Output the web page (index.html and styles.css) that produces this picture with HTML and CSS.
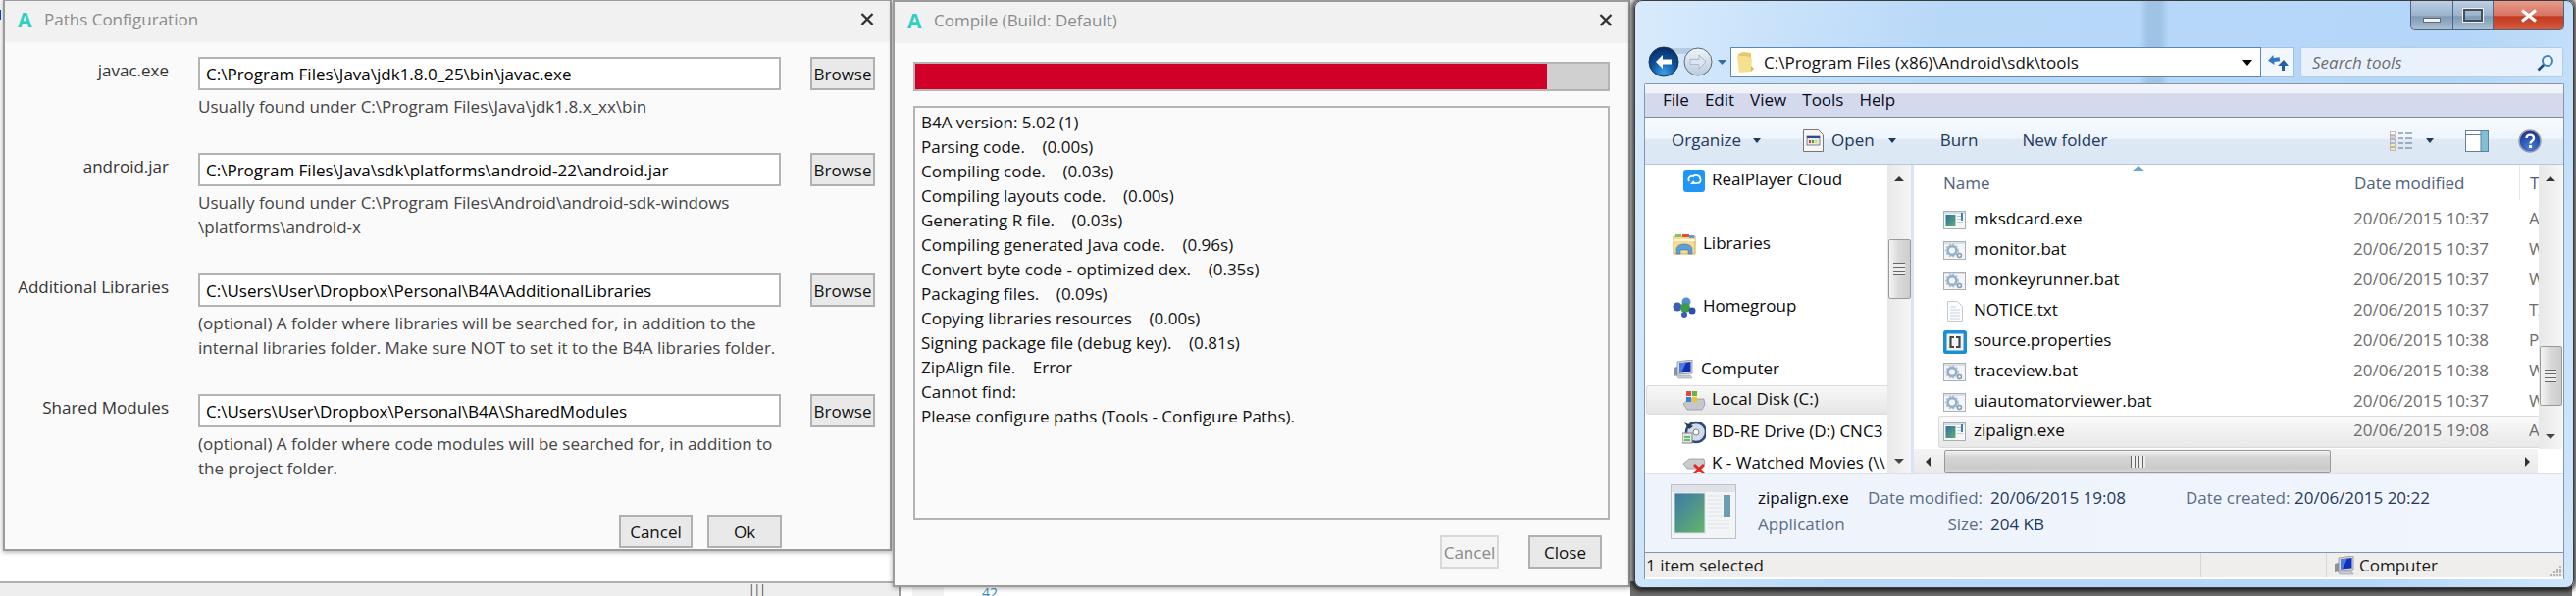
FILE: index.html
```html
<!DOCTYPE html>
<html lang="en">
<head>
<meta charset="utf-8">
<title>Paths Configuration</title>
<link rel="stylesheet" href="styles.css">
</head>
<body>
<svg class="defs" width="0" height="0" aria-hidden="true">
  <defs>
    <linearGradient id="exeG" x1="0" y1="0" x2="1" y2="1"><stop offset="0" stop-color="#2f6da6"/><stop offset="1" stop-color="#62b06e"/></linearGradient>
    <symbol id="i-exe" viewBox="0 0 23 20">
      <rect x=".5" y=".5" width="22" height="18" fill="#f4f6f8" stroke="#a9aeb3"/>
      <rect x="1" y="1" width="21" height="2" fill="#d7dde3"/>
      <rect x="2.5" y="4" width="10" height="12" fill="url(#exeG)"/>
      <rect x="14" y="5" width="6" height="1" fill="#bbb"/><rect x="14" y="8" width="6" height="1" fill="#ccc"/><rect x="14" y="11" width="6" height="1" fill="#ccc"/>
      <rect x="18" y="2" width="2" height="8" fill="#3e7fae"/>
    </symbol>
    <symbol id="i-bat" viewBox="0 0 23 20">
      <rect x=".5" y=".5" width="22" height="18" fill="#f3f5f7" stroke="#aab0b5"/>
      <rect x="1" y="1" width="21" height="2" fill="#d9dfe4"/>
      <circle cx="9" cy="9.5" r="4.4" fill="none" stroke="#93b0cb" stroke-width="2.6"/>
      <circle cx="9" cy="9.5" r="6.2" fill="none" stroke="#a9bed2" stroke-width="1.4" stroke-dasharray="2 1.6"/>
      <circle cx="16.5" cy="14.5" r="2" fill="none" stroke="#7f98b0" stroke-width="1.4"/>
    </symbol>
    <symbol id="i-pc" viewBox="0 0 22 20">
      <path d="M5 2 20 0v14L5 15z" fill="#d5d8dc" stroke="#8a8f95" stroke-width=".8"/>
      <path d="M7 3.500 18.500 2v10.500L7 13.500z" fill="#1030b8"/>
      <path d="M7 3.500 14 2.600 9 13.300 7 13.500z" fill="#4f78e0"/>
      <path d="M1 8l4-1v9l-4 1z" fill="#8d9298"/>
      <path d="M4 16h14l2 3H6z" fill="#c9ccd0" stroke="#8a8f95" stroke-width=".5"/>
    </symbol>
  </defs>
</svg>

<div class="backdrop">
  <div class="backdrop-left"><span class="grip-marks">|||</span></div>
  <div class="backdrop-code"><span class="gutter"></span><span class="line-no">42</span></div>
  <div class="backdrop-desk"></div>
</div>
<span class="blue-tick"></span>

<section class="dialog dialog-paths">
  <header class="titlebar">
    <span class="logo">A</span><span class="title">Paths Configuration</span>
    <svg class="x" width="14" height="13" viewBox="0 0 14 13"><path d="M1.500 1 12.500 12M12.500 1 1.500 12" stroke="#333" stroke-width="2.4" fill="none"/></svg>
  </header>
  <div class="paths-body">
    <div class="path-row">
      <div class="path-label">javac.exe</div>
      <div class="path-field">
        <div class="input">C:\Program Files\Java\jdk1.8.0_25\bin\javac.exe</div>
        <p class="hint">Usually found under C:\Program Files\Java\jdk1.8.x_xx\bin</p>
      </div>
      <div class="btn btn-browse">Browse</div>
    </div>
    <div class="path-row">
      <div class="path-label">android.jar</div>
      <div class="path-field">
        <div class="input">C:\Program Files\Java\sdk\platforms\android-22\android.jar</div>
        <p class="hint">Usually found under C:\Program Files\Android\android-sdk-windows<br>\platforms\android-x</p>
      </div>
      <div class="btn btn-browse">Browse</div>
    </div>
    <div class="path-row">
      <div class="path-label">Additional Libraries</div>
      <div class="path-field">
        <div class="input">C:\Users\User\Dropbox\Personal\B4A\AdditionalLibraries</div>
        <p class="hint">(optional) A folder where libraries will be searched for, in addition to the<br>internal libraries folder. Make sure NOT to set it to the B4A libraries folder.</p>
      </div>
      <div class="btn btn-browse">Browse</div>
    </div>
    <div class="path-row">
      <div class="path-label">Shared Modules</div>
      <div class="path-field">
        <div class="input">C:\Users\User\Dropbox\Personal\B4A\SharedModules</div>
        <p class="hint">(optional) A folder where code modules will be searched for, in addition to<br>the project folder.</p>
      </div>
      <div class="btn btn-browse">Browse</div>
    </div>
    <div class="paths-footer">
      <div class="btn btn-cancel">Cancel</div>
      <div class="btn btn-ok">Ok</div>
    </div>
  </div>
</section>

<section class="dialog dialog-compile">
  <header class="titlebar">
    <span class="logo">A</span><span class="title">Compile (Build: Default)</span>
    <svg class="x" width="14" height="13" viewBox="0 0 14 13"><path d="M1.500 1 12.500 12M12.500 1 1.500 12" stroke="#333" stroke-width="2.4" fill="none"/></svg>
  </header>
  <div class="compile-body">
    <div class="progress"><div class="progress-fill"></div></div>
    <div class="log">
      <div>B4A version: 5.02 (1)</div>
      <div>Parsing code.&nbsp;&nbsp;&nbsp;&nbsp;(0.00s)</div>
      <div>Compiling code.&nbsp;&nbsp;&nbsp;&nbsp;(0.03s)</div>
      <div>Compiling layouts code.&nbsp;&nbsp;&nbsp;&nbsp;(0.00s)</div>
      <div>Generating R file.&nbsp;&nbsp;&nbsp;&nbsp;(0.03s)</div>
      <div>Compiling generated Java code.&nbsp;&nbsp;&nbsp;&nbsp;(0.96s)</div>
      <div>Convert byte code - optimized dex.&nbsp;&nbsp;&nbsp;&nbsp;(0.35s)</div>
      <div>Packaging files.&nbsp;&nbsp;&nbsp;&nbsp;(0.09s)</div>
      <div>Copying libraries resources&nbsp;&nbsp;&nbsp;&nbsp;(0.00s)</div>
      <div>Signing package file (debug key).&nbsp;&nbsp;&nbsp;&nbsp;(0.81s)</div>
      <div>ZipAlign file.&nbsp;&nbsp;&nbsp;&nbsp;Error</div>
      <div>Cannot find:</div>
      <div>Please configure paths (Tools - Configure Paths).</div>
    </div>
    <div class="compile-footer">
      <div class="btn btn-disabled">Cancel</div>
      <div class="btn btn-close">Close</div>
    </div>
  </div>
</section>

<section class="explorer">
  <div class="win-controls">
    <div class="wc wc-min"><span class="wc-min-bar"></span></div>
    <div class="wc wc-max"><span class="wc-max-box"></span></div>
    <div class="wc wc-close"><svg width="18" height="14" viewBox="0 0 18 14"><path d="M2 1.500 16 12.500M16 1.500 2 12.500" stroke="#fff" stroke-width="3.200"/></svg></div>
  </div>

  <div class="address-row">
    <div class="nav-buttons">
      <svg width="84" height="34" viewBox="0 0 84 34">
        <defs>
          <radialGradient id="backG" cx=".5" cy=".85" r=".8"><stop offset="0" stop-color="#3aa0e8"/><stop offset=".55" stop-color="#0e4f9c"/><stop offset="1" stop-color="#0a2f66"/></radialGradient>
          <linearGradient id="fwdG" x1="0" y1="0" x2="0" y2="1"><stop offset="0" stop-color="#eef3f8"/><stop offset="1" stop-color="#bccbdb"/></linearGradient>
        </defs>
        <path d="M18 3h36v6H18z" fill="#9fb7cf" opacity=".55"/>
        <circle cx="16" cy="17" r="15" fill="url(#backG)" stroke="#20364f"/>
        <path d="M8 17l7-7v4.500h9v5h-9V24z" fill="#fff"/>
        <circle cx="51" cy="17" r="14" fill="url(#fwdG)" stroke="#5e6b78"/>
        <path d="M59 17l-7-7v4.500h-9v5h9V24z" fill="#dce6f0" stroke="#9fb0c2" stroke-width=".8"/>
        <path d="M71 15h9l-4.500 5z" fill="#2f6fa8"/>
      </svg>
    </div>
    <div class="address">
      <svg class="folder" width="18" height="23" viewBox="0 0 18 23"><path d="M2 3 7 1l8 1v19H3z" fill="#e9c867"/><path d="M1 5h9l6 3-1 13-12 1z" fill="#f5e08f"/><path d="M15 15l3 3-3 3z" fill="#d9b855"/></svg>
      <span class="address-text">C:\Program Files (x86)\Android\sdk\tools</span>
      <span class="caret-black"></span>
    </div>
    <div class="refresh">
      <svg width="22" height="20" viewBox="0 0 22 20"><path d="M7 2v3h6v4H7v3L1 7z" fill="#2f78c4" transform="rotate(-8 7 7)"/><path d="M15 18v-5H11l6-6 5 6h-4v5z" fill="#1f5fa8"/></svg>
    </div>
    <div class="search">
      <span class="search-text">Search tools</span>
      <svg width="18" height="18" viewBox="0 0 18 18"><circle cx="11" cy="7" r="5" fill="#eef5fc" stroke="#3f83c6" stroke-width="2"/><path d="M7 11 1.500 16.500" stroke="#1d4f86" stroke-width="2.600"/></svg>
    </div>
  </div>

  <div class="pane">
    <nav class="menubar">
      <span>File</span><span>Edit</span><span>View</span><span>Tools</span><span>Help</span>
    </nav>
    <div class="toolbar">
      <span class="tb-text tb-organize">Organize</span><span class="tri tri-organize"></span>
      <svg class="tb-open-icon" width="21" height="25" viewBox="0 0 21 25"><path d="M.5 1.500h15l5 5v17H.5z" fill="#f6f6f2" stroke="#777"/><rect x="4" y="8" width="13" height="9" fill="#e8e8e8" stroke="#5a6c8c" stroke-width=".8"/><rect x="4" y="8" width="13" height="2" fill="#2d4a9a"/><rect x="6" y="12" width="2" height="3" fill="#d33"/><rect x="9" y="12" width="2" height="3" fill="#3a3"/><rect x="12" y="12" width="2" height="3" fill="#dd3"/></svg>
      <span class="tb-text tb-open">Open</span><span class="tri tri-open"></span>
      <span class="tb-text tb-burn">Burn</span>
      <span class="tb-text tb-new">New folder</span>
      <svg class="tb-view" width="24" height="20" viewBox="0 0 24 20"><g fill="#fff" stroke="#999" stroke-width=".6"><rect x=".5" y=".5" width="5" height="3"/><rect x=".5" y="4.500" width="5" height="3" fill="#f3c6c6"/><rect x=".5" y="8.500" width="5" height="3" fill="#d6e6f6"/><rect x=".5" y="12.500" width="5" height="3" fill="#f6eab0"/><rect x=".5" y="16.500" width="5" height="3" fill="#f6eab0"/></g><path d="M9 2h5M16 2h7M9 7h5M16 7h7M9 12h5M16 12h7M9 17h5M16 17h7" stroke="#5d6f88" stroke-width="1.200"/></svg>
      <span class="tri tri-view"></span>
      <svg class="tb-preview" width="24" height="22" viewBox="0 0 24 22"><rect x=".5" y=".5" width="23" height="21" fill="#fff" stroke="#64809c"/><rect x="16" y="1" width="7" height="20" fill="#7fc0d8"/><path d="M16 1v20M1 4.500h15" stroke="#64809c"/></svg>
      <svg class="tb-help" width="24" height="24" viewBox="0 0 24 24"><defs><radialGradient id="helpG" cx=".5" cy=".8" r=".8"><stop offset="0" stop-color="#4a7fe0"/><stop offset="1" stop-color="#12308e"/></radialGradient></defs><circle cx="12" cy="12" r="11" fill="url(#helpG)" stroke="#9a9fa8" stroke-width="1.500"/><path d="M8.500 9c0-4.500 7.500-4.500 7.500 0 0 3-3.500 2.500-3.500 5.500" fill="none" stroke="#fff" stroke-width="2.400"/><rect x="11" y="16" width="3" height="3" fill="#fff"/></svg>
    </div>

    <div class="browser">
      <aside class="navpane">
        <div class="nav-list">
          <div class="nav-item nav-sub">
            <svg width="22" height="23" viewBox="0 0 22 23"><rect width="22" height="23" rx="3" fill="#1f95f5"/><path d="M6 12c-2-3 1-6 4-5 2-2 7-1 7 2 2 2 0 5-3 5H9l2-2" fill="none" stroke="#fff" stroke-width="1.800"/></svg>
            <span>RealPlayer Cloud</span>
          </div>
          <div class="nav-item nav-group nav-first">
            <svg width="24" height="22" viewBox="0 0 24 22"><path d="M1 3h22v18H1z" fill="#f6dc8c" stroke="#c9a955"/><path d="M3 1h6v3H3z" fill="#8ac45c"/><path d="M10 1h7v3h-7z" fill="#e24d3a"/><path d="M17 2h5v3h-5z" fill="#5a9ee0"/><path d="M1 7h22" stroke="#fff" stroke-width="1.500"/><path d="M4 21v-5q1-5 8-5t8 5v5h-4v-4h-8v4z" fill="#5d9fd2" stroke="#3f7bab" stroke-width=".6"/></svg>
            <span>Libraries</span>
          </div>
          <div class="nav-item nav-group">
            <svg width="24" height="21" viewBox="0 0 24 21"><circle cx="5" cy="10" r="4.500" fill="#3b5fb8"/><circle cx="14" cy="5" r="4.500" fill="#4f8fd6"/><circle cx="13" cy="11" r="5" fill="#3d9a45"/><circle cx="20" cy="14" r="3.500" fill="#2c4fae"/><circle cx="12" cy="18" r="3" fill="#3b5fb8"/></svg>
            <span>Homegroup</span>
          </div>
          <div class="nav-item nav-group">
            <svg width="22" height="20"><use href="#i-pc"/></svg>
            <span>Computer</span>
          </div>
          <div class="nav-item nav-drive nav-hot">
            <svg width="24" height="21" viewBox="0 0 24 21"><path d="M1 14 7 9h15l1 6-3 5H5z" fill="#c4c8cc" stroke="#8a8f94" stroke-width=".7"/><rect x="4" y="1" width="5" height="5" fill="#e2483a"/><rect x="10" y="1" width="5" height="5" fill="#6cb33f"/><rect x="4" y="7" width="5" height="5" fill="#3a7fd6"/><rect x="10" y="7" width="5" height="5" fill="#f2c230"/></svg>
            <span>Local Disk (C:)</span>
          </div>
          <div class="nav-item nav-drive">
            <svg width="24" height="24" viewBox="0 0 24 24"><circle cx="14" cy="12" r="10" fill="#d5dbe4" stroke="#2b4a80" stroke-width="2.500"/><circle cx="14" cy="12" r="3" fill="#fff" stroke="#6b7f9e"/><path d="M2 2l9 4-4 3z" fill="#26374f"/><rect x="0" y="13" width="10" height="10" fill="#e6e6d8" stroke="#888"/><path d="M2 20h6M2 17h6" stroke="#3a6" stroke-width="1.500"/></svg>
            <span>BD-RE Drive (D:) CNC3</span>
          </div>
          <div class="nav-item nav-drive">
            <svg width="24" height="22" viewBox="0 0 24 22"><path d="M1 11 7 6h15l1 5-3 5H5z" fill="#c9cccf" stroke="#8a8f94" stroke-width=".7"/><path d="M12 12l10 9M22 12l-10 9" stroke="#e02a20" stroke-width="3"/></svg>
            <span>K - Watched Movies (\\</span>
          </div>
        </div>
        <div class="vscroll nav-vscroll">
          <span class="arrow-up"></span>
          <div class="vthumb nav-thumb"><span class="thumb-grip"></span></div>
          <span class="arrow-down"></span>
        </div>
      </aside>

      <div class="files">
        <div class="files-top">
          <div class="list">
            <div class="list-head">
              <span class="head-name">Name</span>
              <span class="head-date">Date modified</span>
              <span class="head-type">Type</span>
              <span class="sort-arrow"></span>
            </div>
            <div class="file"><svg width="23" height="20"><use href="#i-exe"/></svg><span class="fname">mksdcard.exe</span><span class="fdate">20/06/2015 10:37</span><span class="ftype">Application</span></div>
            <div class="file"><svg width="23" height="20"><use href="#i-bat"/></svg><span class="fname">monitor.bat</span><span class="fdate">20/06/2015 10:37</span><span class="ftype">Windows Batch File</span></div>
            <div class="file"><svg width="23" height="20"><use href="#i-bat"/></svg><span class="fname">monkeyrunner.bat</span><span class="fdate">20/06/2015 10:37</span><span class="ftype">Windows Batch File</span></div>
            <div class="file"><svg width="23" height="21" viewBox="0 0 23 21"><path d="M4.500.5h10l5 5v15h-15z" fill="#fafcfe" stroke="#c5cbd1"/><path d="M7 6h6M7 9h10M7 12h10M7 15h10M7 18h10" stroke="#c9d4de"/></svg><span class="fname">NOTICE.txt</span><span class="fdate">20/06/2015 10:37</span><span class="ftype">TXT File</span></div>
            <div class="file"><svg width="24" height="24" viewBox="0 0 24 24"><rect width="24" height="24" rx="2.500" fill="#1a8fd6"/><rect x="3.500" y="3.500" width="17" height="17" fill="#f2f4f5"/><path d="M11 7H7.500v10H11M13 7h3.500v10H13" fill="none" stroke="#444" stroke-width="2.200"/></svg><span class="fname">source.properties</span><span class="fdate">20/06/2015 10:38</span><span class="ftype">PROPERTIES File</span></div>
            <div class="file"><svg width="23" height="20"><use href="#i-bat"/></svg><span class="fname">traceview.bat</span><span class="fdate">20/06/2015 10:38</span><span class="ftype">Windows Batch File</span></div>
            <div class="file"><svg width="23" height="20"><use href="#i-bat"/></svg><span class="fname">uiautomatorviewer.bat</span><span class="fdate">20/06/2015 10:37</span><span class="ftype">Windows Batch File</span></div>
            <div class="file file-sel"><svg width="23" height="20"><use href="#i-exe"/></svg><span class="fname">zipalign.exe</span><span class="fdate">20/06/2015 19:08</span><span class="ftype">Application</span></div>
          </div>
          <div class="vscroll file-vscroll">
            <span class="arrow-up"></span>
            <div class="vthumb file-thumb"><span class="thumb-grip"></span></div>
            <span class="arrow-down"></span>
          </div>
        </div>
        <div class="hscroll">
          <span class="arrow-left"></span>
          <div class="hthumb"><span class="hthumb-grip"></span></div>
          <span class="arrow-right"></span>
        </div>
      </div>
    </div>

    <div class="details">
      <svg class="details-icon" width="67" height="56" viewBox="0 0 67 56">
        <defs><linearGradient id="bigG" x1="0" y1="0" x2=".8" y2="1"><stop offset="0" stop-color="#3d78a8"/><stop offset="1" stop-color="#62b06e"/></linearGradient></defs>
        <rect x=".5" y=".5" width="66" height="55" fill="#f2f4f6" stroke="#bcc2c8"/>
        <rect x="1" y="1" width="65" height="7" fill="#dfe3e8"/>
        <rect x="4" y="9" width="31" height="41" fill="url(#bigG)" stroke="#d8dde2"/>
        <path d="M38 12h14M38 16h14M38 20h14M38 24h14M38 28h14M38 32h22M38 37h22M38 41h22M38 45h22" stroke="#dfe3e6"/>
        <rect x="54" y="11" width="7" height="22" fill="#6d9bb0"/>
      </svg>
      <div class="details-grid">
        <span class="d-name">zipalign.exe</span>
        <span class="d-key">Date modified:</span>
        <span class="d-val">20/06/2015 19:08</span>
        <span class="d-key d-key2">Date created:</span>
        <span class="d-val">20/06/2015 20:22</span>
        <span class="d-kind">Application</span>
        <span class="d-key">Size:</span>
        <span class="d-val">204 KB</span>
      </div>
    </div>

    <footer class="statusbar">
      <span class="st-left">1 item selected</span>
      <span class="st-mid"></span>
      <span class="st-right">
        <svg width="22" height="20"><use href="#i-pc"/></svg>
        <span>Computer</span>
      </span>
      <svg class="st-grip" width="12" height="12" viewBox="0 0 12 12"><path d="M9 1h2v2H9zM6 4h2v2H6zM9 4h2v2H9zM3 7h2v2H3zM6 7h2v2H6zM9 7h2v2H9zM0 10h2v2H0zM3 10h2v2H3zM6 10h2v2H6zM9 10h2v2H9z" fill="#b5b5b5"/></svg>
    </footer>
  </div>
</section>
</body>
</html>
```

FILE: styles.css
```css
* { box-sizing: border-box; }
html, body { margin: 0; padding: 0; }
body {
  position: relative;
  width: 2626px;
  height: 608px;
  overflow: hidden;
  background: #fff;
  font-family: "Open Sans", "Liberation Sans", sans-serif;
  font-size: 17px;
  color: #000;
}
.defs { position: absolute; }
p { margin: 0; }

/* desktop behind the windows */
.backdrop {
  position: absolute;
  left: 0;
  right: 0;
  top: 593px;
  height: 15px;
  display: flex;
}
.backdrop-left {
  width: 916px;
  flex: none;
  border-top: 2px solid #aeaeae;
  background: #eeeeee;
  padding-left: 763px;
  font-size: 12px;
  line-height: 14px;
  color: #444;
}
.grip-marks { letter-spacing: -1px; }
.backdrop-code {
  width: 746px;
  flex: none;
  border-left: 2px solid #9a9a9a;
  padding-left: 12px;
  display: flex;
  background: #fff;
}
.backdrop-desk { width: 960px; flex: none; background: #6e6e6e; }
.gutter { width: 32px; height: 15px; background: #f2f2f2; }
.line-no {
  margin-left: 39px;
  margin-top: 4px;
  font-size: 14px;
  line-height: 16px;
  color: #3a8fb5;
}
.blue-tick {
  position: absolute;
  left: 0;
  top: 10px;
  width: 1px;
  height: 10px;
  background: #1040d0;
}

/* B4A dialogs */
.dialog {
  position: absolute;
  background: #fafafa;
  border: 2px solid #9b9b9b;
  box-shadow: 0 1px 5px rgba(0, 0, 0, .35);
  display: flex;
  flex-direction: column;
}
.dialog-paths { left: 3px; top: -1px; width: 906px; height: 563px; }
.dialog-compile { left: 910px; top: 0; width: 752px; height: 599px; }
.titlebar {
  height: 42px;
  flex: none;
  background: #f1f1f1;
  display: flex;
  align-items: center;
  padding: 0 16px 5px 13px;
}
.logo {
  font-weight: 700;
  font-size: 21px;
  line-height: 24px;
  color: #2fd0bd;
  width: 27px;
}
.title { flex: 1; color: #8b8b8b; }
.paths-body {
  flex: 1;
  padding: 15px 0 0 0;
  display: flex;
  flex-direction: column;
  gap: 35px;
}
.path-row {
  display: grid;
  grid-template-columns: 167px 594px 66px;
  column-gap: 30px;
  align-items: start;
}
.path-label {
  text-align: right;
  line-height: 25px;
  padding-top: 1px;
  color: #333;
  white-space: nowrap;
}
.input {
  height: 34px;
  border: 2px solid #b4b4b4;
  background: #fff;
  padding-left: 6px;
  line-height: 31px;
  white-space: nowrap;
}
.hint {
  margin-top: 4px;
  line-height: 25px;
  color: #444;
  white-space: nowrap;
}
.btn {
  height: 34px;
  border: 2px solid #b0b0b0;
  background: #e9e9e9;
  text-align: center;
  line-height: 31px;
  color: #111;
  white-space: nowrap;
}
.paths-footer {
  display: flex;
  gap: 15px;
  padding-left: 626px;
}
.btn-cancel { width: 75px; }
.btn-ok { width: 76px; }

.compile-body {
  flex: 1;
  padding: 19px 19px 0;
  display: flex;
  flex-direction: column;
}
.progress {
  height: 30px;
  border: 2px solid #b4b4b4;
  background: #d0d0d0;
}
.progress-fill { width: 644px; height: 100%; background: #d10029; }
.log {
  height: 422px;
  margin-top: 15px;
  border: 2px solid #b4b4b4;
  padding: 2px 6px;
  line-height: 25px;
  white-space: nowrap;
  color: #111;
}
.compile-footer {
  display: flex;
  justify-content: flex-end;
  gap: 30px;
  margin-top: 16px;
  padding-right: 8px;
}
.btn-disabled { width: 60px; border-color: #d8d8d8; background: #f4f4f4; color: #8a8a8a; }
.btn-close { width: 75px; }

/* Windows Explorer */
.explorer {
  position: absolute;
  left: 1666px;
  top: 0;
  width: 958px;
  height: 600px;
  border: 1px solid #3c3c3c;
  border-radius: 8px;
  padding: 0 9px;
  box-shadow: 0 0 5px 3px rgba(0, 0, 0, .75);
  background:
    linear-gradient(90deg, transparent, rgba(130, 170, 205, .45) 30%, rgba(130, 170, 205, .45) 70%, transparent) 514px 0 / 30px 84px no-repeat,
    linear-gradient(100deg, #d8ebfc 0, #b8d8f8 30%, #b4d6f8 80%, #cfe5fb 100%);
  display: flex;
  flex-direction: column;
}
.win-controls {
  height: 30px;
  flex: none;
  display: flex;
  justify-content: flex-end;
}
.wc {
  height: 30px;
  display: flex;
  align-items: center;
  justify-content: center;
  border: 1px solid #50657c;
  border-top: 0;
  border-left-width: 0;
}
.wc-min {
  width: 44px;
  border-left-width: 1px;
  border-bottom-left-radius: 5px;
  background: linear-gradient(#bcd0e4, #9ab3cc 50%, #7f9ab5 55%, #a9c0d6);
}
.wc-max { width: 41px; background: linear-gradient(#bcd0e4, #9ab3cc 50%, #7f9ab5 55%, #a9c0d6); }
.wc-close {
  width: 72px;
  border-bottom-right-radius: 5px;
  background: linear-gradient(#e59b8c, #d97463 50%, #c13a22 55%, #d75a3c);
}
.wc-min-bar { width: 18px; height: 5px; margin-top: 10px; background: #f2f2f2; border: 1px solid #667; }
.wc-max-box { width: 20px; height: 13px; border: 2px solid #444f5c; outline: 1px solid #eee; background: transparent; }

.address-row {
  flex: none;
  margin-top: 17px;
  height: 31px;
  display: flex;
}
.nav-buttons { width: 88px; flex: none; margin-top: -2px; padding-left: 4px; }
.address {
  width: 541px;
  flex: none;
  background: #fff;
  border: 1px solid #5a89b4;
  display: flex;
  align-items: center;
  padding-left: 5px;
}
.address-text { margin-left: 10px; flex: 1; color: #111; }
.caret-black {
  margin-right: 8px;
  width: 0;
  height: 0;
  border-left: 5px solid transparent;
  border-right: 5px solid transparent;
  border-top: 6px solid #000;
}
.refresh {
  width: 34px;
  flex: none;
  background: #f2f7fd;
  border: 1px solid #9fc0de;
  border-left: 0;
  display: flex;
  align-items: center;
  justify-content: center;
}
.search {
  width: 268px;
  flex: none;
  margin-left: 6px;
  background: #e9f2fc;
  border: 1px solid #b5cde3;
  border-radius: 2px;
  display: flex;
  align-items: center;
  justify-content: space-between;
  padding: 0 8px 0 11px;
}
.search-text { font-style: italic; color: #6d6d6d; }

.pane {
  margin-top: 6px;
  flex: none;
  width: 938px;
  height: 506px;
  border-top: 1px solid #8596a8;
  border-left: 1px solid #8596a8;
  border-right: 1px solid #8596a8;
  background: #fff;
  display: flex;
  flex-direction: column;
  border-top-left-radius: 2px;
  border-top-right-radius: 2px;
}
.menubar {
  height: 34px;
  flex: none;
  border-bottom: 1px solid #7b8a9c;
  background: linear-gradient(#f2f5fa 0, #eef1f8 26%, #d4daec 30%, #d4daec 100%);
  display: flex;
  align-items: center;
  gap: 16px;
  padding: 0 0 3px 18px;
  color: #0a0a1e;
}
.toolbar {
  height: 48px;
  flex: none;
  background: linear-gradient(#f8fbff 0, #eef5fc 45%, #dfe9f5 48%, #dbe7f4 100%);
  border-bottom: 1px solid #b4c7dc;
  display: flex;
  align-items: center;
  color: #1e395b;
  padding-left: 27px;
}
.tb-text { margin-bottom: 3px; }
.tri {
  width: 0;
  height: 0;
  border-left: 4px solid transparent;
  border-right: 4px solid transparent;
  border-top: 5px solid #1e395b;
}
.tri-organize { margin-left: 12px; }
.tb-open-icon { margin-left: 43px; }
.tb-open { margin-left: 8px; }
.tri-open { margin-left: 14px; }
.tb-burn { margin-left: 45px; }
.tb-new { margin-left: 45px; }
.tb-view { margin-left: auto; }
.tri-view { margin-left: 13px; }
.tb-preview { margin-left: 32px; }
.tb-help { margin-left: 30px; margin-right: 22px; }

.browser { height: 315px; flex: none; display: flex; }
.navpane {
  width: 274px;
  flex: none;
  display: flex;
  border-right: 3px solid #d7e6f7;
}
.nav-list { width: 247px; flex: none; overflow: hidden; }
.nav-item {
  height: 32px;
  display: flex;
  align-items: center;
  gap: 7px;
  white-space: nowrap;
  color: #0a0a0a;
  padding-left: 28px;
}
.nav-item svg { flex: none; }
.nav-item span { margin-bottom: 4px; }
.nav-sub { padding-left: 39px; }
.nav-drive { padding-left: 38px; gap: 6px; }
.nav-group { margin-top: 32px; }
.nav-first { margin-top: 33px; }
.nav-hot {
  margin-left: 1px;
  padding-left: 36px;
  height: 30px;
  margin-bottom: 2px;
  border: 1px solid #dcdcdc;
  border-right: 0;
  border-radius: 3px 0 0 3px;
  background: linear-gradient(#f8f8f8, #e6e6e6);
}
.vscroll {
  width: 24px;
  flex: none;
  background: linear-gradient(90deg, #e8e8e8, #f5f5f5);
  display: flex;
  flex-direction: column;
  align-items: center;
}
.arrow-up, .arrow-down {
  width: 0;
  height: 0;
  border-left: 5px solid transparent;
  border-right: 5px solid transparent;
}
.arrow-up { border-bottom: 5px solid #333; margin-top: 12px; }
.arrow-down { border-top: 5px solid #444; margin-top: auto; margin-bottom: 10px; }
.vthumb {
  width: 23px;
  border: 1px solid #9a9a9a;
  border-radius: 2px;
  background: linear-gradient(90deg, #f4f4f4, #d8d8d8 50%, #cdcdcd);
  display: flex;
  align-items: center;
  justify-content: center;
}
.thumb-grip {
  width: 12px;
  height: 13px;
  background: repeating-linear-gradient(#666 0 1px, #eee 1px 4px);
}
.nav-thumb { height: 61px; margin-top: 59px; }
.file-thumb { height: 61px; margin-top: 168px; }

.files { flex: 1; display: flex; flex-direction: column; min-width: 0; }
.files-top { height: 290px; flex: none; display: flex; }
.list { width: 637px; flex: none; overflow: hidden; }
.list-head {
  height: 41px;
  display: grid;
  grid-template-columns: 438px 179px 20px;
  color: #4c607a;
  white-space: nowrap;
  position: relative;
}
.head-name { padding: 7px 0 0 30px; }
.head-date, .head-type {
  padding: 7px 0 0 10px;
  height: 36px;
  border-left: 1px solid #dde8f3;
  overflow: hidden;
}
.sort-arrow {
  position: absolute;
  left: 223px;
  top: 1px;
  width: 0;
  height: 0;
  border-left: 6px solid transparent;
  border-right: 6px solid transparent;
  border-bottom: 5px solid #6aa6d0;
}
.file {
  height: 31px;
  display: grid;
  grid-template-columns: 31px 387px 179px 10px;
  align-items: center;
  padding-left: 30px;
  white-space: nowrap;
  overflow: hidden;
}
.file span { margin-bottom: 4px; }
.fname { color: #0a0a0a; }
.fdate, .ftype { color: #6d6d6d; overflow: hidden; }
.file-sel {
  margin-left: 25px;
  margin-top: -2px;
  padding-left: 4px;
  height: 33px;
  border: 1px solid #dadada;
  border-right: 0;
  border-radius: 3px 0 0 3px;
  background: linear-gradient(#fafafa, #e8e8e8);
}
.hscroll {
  height: 25px;
  flex: none;
  margin-right: 26px;
  background: linear-gradient(#f4f4f4, #e9e9e9);
  display: flex;
  align-items: center;
}
.arrow-left {
  margin-left: 12px;
  width: 0;
  height: 0;
  border-top: 5px solid transparent;
  border-bottom: 5px solid transparent;
  border-right: 5px solid #333;
}
.hthumb {
  margin-left: 14px;
  width: 394px;
  height: 24px;
  border: 1px solid #9a9a9a;
  border-radius: 2px;
  background: linear-gradient(#f2f2f2, #d4d4d4 30%, #cbcbcb 80%, #dadada);
  display: flex;
  align-items: center;
  justify-content: center;
}
.hthumb-grip {
  width: 15px;
  height: 12px;
  background: repeating-linear-gradient(90deg, #666 0 1px, #eee 1px 4px);
}
.arrow-right {
  margin-left: auto;
  margin-right: 8px;
  width: 0;
  height: 0;
  border-top: 5px solid transparent;
  border-bottom: 5px solid transparent;
  border-left: 5px solid #333;
}

.details {
  height: 80px;
  flex: none;
  background: linear-gradient(90deg, #eef3fc, #f1f5fd);
  border-top: 1px solid #d4e1f0;
  display: flex;
}
.details-icon { margin: 10px 0 0 26px; flex: none; }
.details-grid {
  margin-left: 22px;
  padding-top: 10px;
  display: grid;
  grid-template-columns: 112px 117px 207px 103px auto;
  grid-auto-rows: 27px;
  align-items: center;
  white-space: nowrap;
}
.d-name { color: #0a0a0a; }
.d-kind { color: #5a6d85; }
.d-key { text-align: right; color: #5a6d85; }
.d-key2 { text-align: left; }
.d-val { color: #1e395b; padding-left: 8px; }

.statusbar {
  height: 27px;
  flex: none;
  border-top: 1px solid #8596a8;
  border-bottom: 1px solid #fff;
  background: #f0eeec;
  display: flex;
  align-items: center;
  color: #1a1a1a;
  position: relative;
}
.st-left { width: 566px; padding-left: 1px; flex: none; height: 100%; line-height: 25px; white-space: nowrap; }
.st-mid { width: 129px; flex: none; height: 100%; border-left: 1px solid #d8d6d4; border-right: 1px solid #d8d6d4; }
.st-right { display: flex; align-items: center; gap: 4px; margin-left: 7px; }
.st-grip { position: absolute; right: 1px; bottom: 1px; }
```
